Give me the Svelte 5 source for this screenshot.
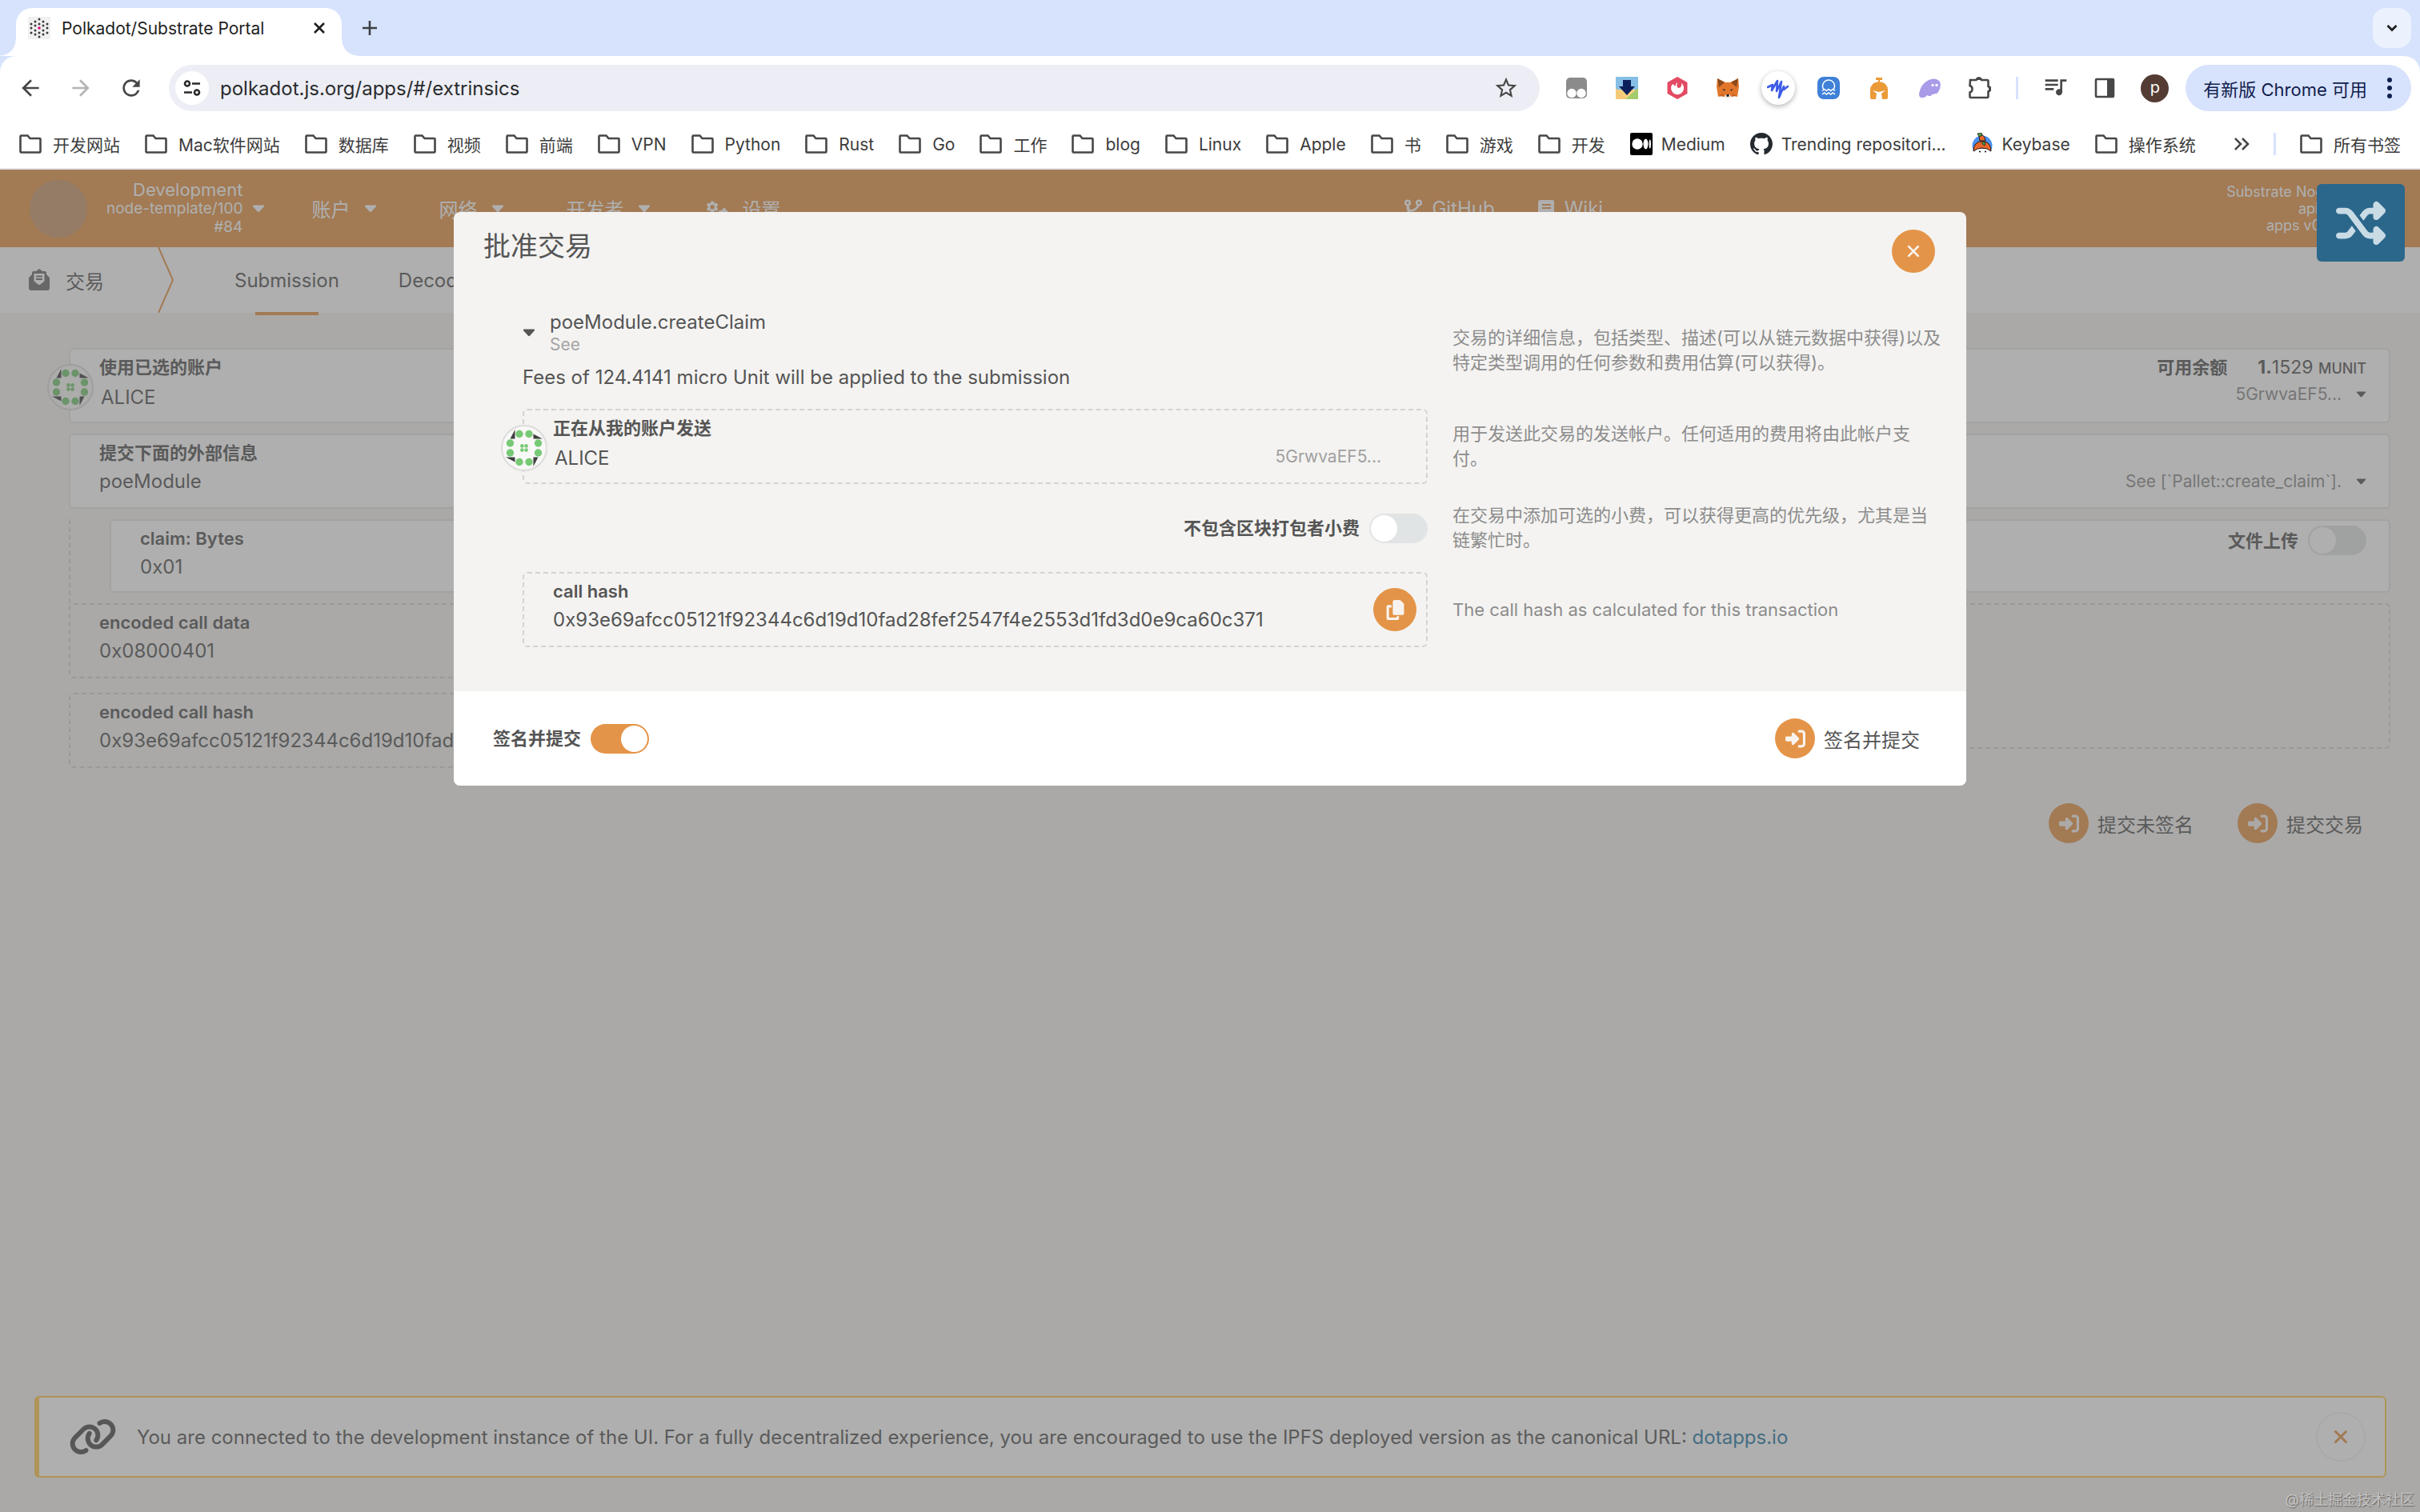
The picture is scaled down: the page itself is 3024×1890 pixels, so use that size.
<script lang="ts">
	type Bookmark = { title: string; icon?: 'medium' | 'github' | 'keybase' };

	const bookmarks: Bookmark[] = [
		{ title: '开发网站' },
		{ title: 'Mac软件网站' },
		{ title: '数据库' },
		{ title: '视频' },
		{ title: '前端' },
		{ title: 'VPN' },
		{ title: 'Python' },
		{ title: 'Rust' },
		{ title: 'Go' },
		{ title: '工作' },
		{ title: 'blog' },
		{ title: 'Linux' },
		{ title: 'Apple' },
		{ title: '书' },
		{ title: '游戏' },
		{ title: '开发' },
		{ title: 'Medium', icon: 'medium' },
		{ title: 'Trending repositori...', icon: 'github' },
		{ title: 'Keybase', icon: 'keybase' },
		{ title: '操作系统' }
	];

	const callHash = '0x93e69afcc05121f92344c6d19d10fad28fef2547f4e2553d1fd3d0e9ca60c371';

	// Dots of the tab icon, as rings around the centre.
	const faviconDots = [
		[14, 3], [9, 6], [19, 6], [4, 9], [14, 9], [24, 9], [9, 11], [19, 11],
		[4, 14], [24, 14], [9, 17], [19, 17], [4, 20], [14, 20], [24, 20], [9, 22], [19, 22], [14, 25]
	];

	let url = $state('polkadot.js.org/apps/#/extrinsics');
	let claim = $state('0x01');
	let fileUpload = $state(false);
	let includeTip = $state(false);
	let signAndSubmit = $state(true);
</script>

{#snippet folder()}
	<svg class="ico28" viewBox="0 0 28 28" aria-hidden="true">
		<path d="M2.5 3.5h8l3 3.5h12q1 0 1 1v15.5q0 1-1 1h-23q-1 0-1-1v-19q0-1 1-1z" fill="none" stroke="#474747" stroke-width="2.6" />
	</svg>
{/snippet}

{#snippet caret()}
	<svg class="caret" viewBox="0 0 16 10" aria-hidden="true">
		<path d="M1.5.5h13q1.2.6.3 1.8L9 8.8q-1 .9-2 0L1.2 2.3Q.3 1.1 1.5.5z" fill="currentColor" />
	</svg>
{/snippet}

{#snippet cross()}
	<svg class="cross" viewBox="0 0 20 20" aria-hidden="true">
		<path d="M3.5 3.5l13 13M16.5 3.5l-13 13" stroke="currentColor" stroke-width="3" stroke-linecap="round" />
	</svg>
{/snippet}

{#snippet signIn()}
	<span class="disc">
		<svg viewBox="0 0 512 512" aria-hidden="true">
			<path
				fill="currentColor"
				d="M217.9 105.9L340.7 228.7c7.2 7.2 11.3 17.1 11.3 27.3s-4.1 20.1-11.3 27.3L217.9 406.1c-6.4 6.4-15 9.9-24 9.9c-18.7 0-33.9-15.2-33.9-33.9l0-62.1L32 320c-17.7 0-32-14.3-32-32l0-64c0-17.7 14.3-32 32-32l128 0 0-62.1c0-18.7 15.2-33.9 33.9-33.9c9 0 17.6 3.6 24 9.9zM352 416l64 0c17.7 0 32-14.3 32-32l0-256c0-17.7-14.3-32-32-32l-64 0c-17.7 0-32-14.3-32-32s14.3-32 32-32l64 0c53 0 96 43 96 96l0 256c0 53-43 96-96 96l-64 0c-17.7 0-32-14.3-32-32s14.3-32 32-32z"
			/>
		</svg>
	</span>
{/snippet}

{#snippet identicon()}
	<svg class="identicon" viewBox="-29 -29 58 58" aria-hidden="true">
		<circle r="28" fill="#f8f8f7" stroke="#dcdcdc" stroke-width="2" />
		<g fill="#404040">
			{#each [0, 90, 180, 270] as turn (turn)}
				<path transform="rotate({turn})" d="M-11.5-23v11.5h-6z" />
			{/each}
		</g>
		<g fill="#78c975">
			{#each [0, 90, 180, 270] as turn (turn)}
				<g transform="rotate({turn})">
					<circle cx="-6" cy="-17.5" r="4.7" />
					<circle cx="6" cy="-17.5" r="4.7" />
					<circle cx="-2.6" cy="-2.6" r="2.3" />
				</g>
			{/each}
		</g>
	</svg>
{/snippet}

<div class="window">
	<header class="chrome">
		<div class="tabstrip">
			<div class="tab">
				<svg class="ico28" viewBox="0 0 28 28" aria-hidden="true">
					<rect width="28" height="28" fill="#f1f1f1" />
					{#each faviconDots as [cx, cy] (`${cx}-${cy}`)}
						<circle {cx} {cy} r="1.5" fill="#3c3c3c" />
					{/each}
					<circle cx="14" cy="14" r="1.8" fill="#e6007a" />
				</svg>
				<span class="tab-title">Polkadot/Substrate Portal</span>
				<button aria-label="Close tab">
					<svg class="ico16" viewBox="0 0 16 16"><path d="M2 2l12 12M14 2L2 14" stroke="#1f1f1f" stroke-width="2.6" /></svg>
				</button>
			</div>
			<button aria-label="New tab">
				<svg class="ico20" viewBox="0 0 20 20"><path d="M10 1v18M1 10h18" stroke="#3c4043" stroke-width="2.6" /></svg>
			</button>
			<button class="tab-search" aria-label="Search tabs">
				<svg class="ico16" viewBox="0 0 16 16"><path d="M2.5 5L8 10.5 13.5 5" fill="none" stroke="#1f1f1f" stroke-width="2.8" /></svg>
			</button>
		</div>

		<div class="toolbar">
			<div class="nav-buttons">
				<button aria-label="Back">
					<svg class="ico32" viewBox="0 0 24 24"><path fill="#474747" d="M20 11H7.83l5.59-5.59L12 4l-8 8 8 8 1.41-1.41L7.83 13H20v-2z" /></svg>
				</button>
				<button aria-label="Forward">
					<svg class="ico32" viewBox="0 0 24 24"><path fill="#b4b4b4" d="M4 11h12.17l-5.59-5.59L12 4l8 8-8 8-1.41-1.41L16.17 13H4v-2z" /></svg>
				</button>
				<button aria-label="Reload">
					<svg class="ico32" viewBox="0 0 24 24"><path fill="#474747" d="M17.65 6.35A7.958 7.958 0 0012 4c-4.42 0-7.99 3.58-7.99 8s3.57 8 7.99 8c3.73 0 6.84-2.55 7.73-6h-2.08A5.99 5.99 0 0112 18c-3.31 0-6-2.69-6-6s2.69-6 6-6c1.66 0 3.14.69 4.22 1.78L13 11h7V4l-2.35 2.35z" /></svg>
				</button>
			</div>
			<div class="omnibox">
				<button class="site-info" aria-label="Site information">
					<svg class="ico24" viewBox="0 0 24 24" fill="none" stroke="#2b2b2b" stroke-width="2.6">
						<circle cx="6" cy="6.5" r="3" /><path d="M12 6.5h10M2 17.5h10" /><circle cx="18" cy="17.5" r="3" />
					</svg>
				</button>
				<input class="url" type="text" aria-label="Address" bind:value={url} />
				<button aria-label="Bookmark this page">
					<svg class="ico32" viewBox="0 0 24 24"><path fill="#474747" d="M22 9.24l-7.19-.62L12 2 9.19 8.63 2 9.24l5.46 4.73L5.82 21 12 17.27 18.18 21l-1.63-7.03L22 9.24zM12 15.4l-3.76 2.27 1-4.28-3.32-2.88 4.38-.38L12 6.1l1.71 4.04 4.38.38-3.32 2.88 1 4.28L12 15.4z" /></svg>
				</button>
			</div>
			<div class="extensions">
				<svg viewBox="0 0 28 28">
					<rect x="1" y="1" width="26" height="26" rx="5" fill="#8b8b8b" />
					<circle cx="8" cy="20.5" r="5.7" fill="#fff" /><circle cx="20" cy="20.5" r="5.7" fill="#fff" />
				</svg>
				<svg viewBox="0 0 28 28">
					<rect width="28" height="28" fill="#f3cf7e" /><path d="M0 0h28v16H0z" fill="#85bfe6" /><path d="M0 14l14 14H0z" fill="#f5c878" /><path d="M28 14L12 28h16z" fill="#a4cc6c" />
					<path d="M9 4h10v8h5L14 23 4 12h5z" fill="#0b1f5a" />
				</svg>
				<svg viewBox="0 0 28 28">
					<path d="M14 0l12.5 7v14L14 28 1.5 21V7z" fill="#e34a63" />
					<path d="M8 9a8 8 0 1 0 13 1l-2-2q1 5-3 6-4 0-2-7-3 2-2 5z" fill="#fff" />
				</svg>
				<svg viewBox="0 0 28 28">
					<path d="M1 2l10 5h6l10-5 1 10-2 13-7-2-3 3h-4l-3-3-7 2L0 12z" fill="#e2762b" />
					<path d="M1 2l9 5-7 6zM27 2l-9 5 7 6z" fill="#8a4a1c" />
					<path d="M11 22h6v3l-1 2h-4l-1-2z" fill="#f3ece5" /><path d="M12 22h4l-1 3h-2z" fill="#1e1e1e" />
					<path d="M7 15l4 1-1 2zM21 15l-4 1 1 2z" fill="#363436" /><path d="M3 24l5-3 2 4zM25 24l-5-3-2 4z" fill="#c9621f" />
				</svg>
				<span class="ext-active">
					<svg viewBox="0 0 28 28"><path d="M1 13l6-3-1 7 7-12-1 13 6-12-3 20 6-14 0 4 5-4" fill="none" stroke="#3d5ce8" stroke-width="2.6" stroke-linejoin="round" stroke-linecap="round" /></svg>
				</span>
				<svg viewBox="0 0 28 28">
					<rect width="28" height="28" rx="8" fill="#3f80d8" />
					<path d="M8 16a7.5 7.5 0 1 1 12 0M6 17.5l2.7-2 2.6 2 2.7-2 2.7 2 2.6-2 2.7 2M6 22l2.7-2 2.6 2 2.7-2 2.7 2 2.6-2 2.7 2" fill="none" stroke="#fff" stroke-width="1.5" />
				</svg>
				<svg viewBox="0 0 28 28">
					<path d="M10 1h8v3h-3v2h-2V4h-3zM3 17Q3 7 14 6q11 1 11 11v9q0 2-2 2h-5l-1-7 5-4-8 2-8-2 5 4-1 7H5q-2 0-2-2z" fill="#eb9a38" />
				</svg>
				<svg viewBox="0 0 28 28">
					<path d="M1 21Q3 9 13 4q9-4 14 2 2 5-1 11-2 5-5 4l-2 1-2 0-1 2h-3l-2-1q-3 4-8 3-2-1-2-5z" fill="#a99be8" />
					<circle cx="18" cy="10.5" r="1.7" fill="#fff" /><circle cx="23" cy="10.5" r="1.7" fill="#fff" />
				</svg>
				<svg viewBox="0 0 28 28">
					<path d="M2 4h7.5a3.5 3.5 0 0 1 6.5 0h7q1.5 0 1.5 1.5V12a3.5 3.5 0 0 1 0 6.5v6q0 1.5-1.5 1.5H2.5q-1 0-1-1v-5.5a4.5 4.5 0 0 0 0-8.5z" fill="none" stroke="#474747" stroke-width="2.6" />
					<path d="M9 4a3.7 3.7 0 0 1 7.5 0zM25 11.5a3.7 3.7 0 0 1 0 7.5z" fill="#474747" />
				</svg>
			</div>
			<span class="separator"></span>
			<div class="tools">
				<button aria-label="Media controls">
					<svg class="ico32" viewBox="0 0 24 24"><path fill="#474747" d="M14 4H2v2h12V4zm0 4H2v2h12V8zM2 14h8v-2H2v2zM16 4v9.18c-.31-.11-.65-.18-1-.18-1.66 0-3 1.34-3 3s1.34 3 3 3 3-1.34 3-3V6h4V4h-6z" /></svg>
				</button>
				<button aria-label="Side panel">
					<svg class="ico28" viewBox="0 0 28 28"><rect x="3" y="3" width="22" height="22" rx="1" fill="none" stroke="#474747" stroke-width="2.6" /><path d="M17 3h8v22h-8z" fill="#474747" /></svg>
				</button>
				<button class="avatar" aria-label="Profile">p</button>
			</div>
			<button class="update">
				<span>有新版 Chrome 可用</span>
				<svg class="dots" viewBox="0 0 6 26" fill="#10204d" aria-hidden="true"><circle cx="3" cy="3" r="3" /><circle cx="3" cy="13" r="3" /><circle cx="3" cy="23" r="3" /></svg>
			</button>
		</div>

		<nav class="bookmarks" aria-label="Bookmarks">
			{#each bookmarks as bookmark, i (i)}
				<a href="#bookmark-{i}" class:site={bookmark.icon}>
					{#if bookmark.icon === 'medium'}
						<svg class="ico28" viewBox="0 0 28 28"><rect width="28" height="28" rx="2" /><g fill="#fff"><circle cx="9" cy="14" r="6.7" /><ellipse cx="19.5" cy="14" rx="3" ry="6.4" /><ellipse cx="24.8" cy="14" rx="1.2" ry="5.6" /></g></svg>
					{:else if bookmark.icon === 'github'}
						<svg class="ico28" viewBox="0 0 16 16"><path fill="#24292f" d="M8 0C3.58 0 0 3.58 0 8c0 3.54 2.29 6.53 5.47 7.59.4.07.55-.17.55-.38 0-.19-.01-.82-.01-1.49-2.01.37-2.53-.49-2.69-.94-.09-.23-.48-.94-.82-1.13-.28-.15-.68-.52-.01-.53.63-.01 1.08.58 1.23.82.72 1.21 1.87.87 2.33.66.07-.52.28-.87.51-1.07-1.78-.2-3.64-.89-3.64-3.95 0-.87.31-1.59.82-2.15-.08-.2-.36-1.02.08-2.12 0 0 .67-.21 2.2.82.64-.18 1.32-.27 2-.27s1.36.09 2 .27c1.53-1.04 2.2-.82 2.2-.82.44 1.1.16 1.92.08 2.12.51.56.82 1.27.82 2.15 0 3.07-1.87 3.75-3.65 3.95.29.25.54.73.54 1.48 0 1.07-.01 1.93-.01 2.2 0 .21.15.46.55.38A8.01 8.01 0 0016 8c0-4.42-3.58-8-8-8z" /></svg>
					{:else if bookmark.icon === 'keybase'}
						<svg class="ico28" viewBox="0 0 28 28">
							<circle cx="14" cy="16" r="12.5" fill="#4a90f0" />
							<path d="M5 20h18l2 8H3z" fill="#fff" />
							<path d="M3 23Q3 11 14 10.5 25 11 25 23l-5-3-6-1-6 1z" fill="#e8672c" stroke="#2a1a12" stroke-width="1" />
							<path d="M10 4q5-3 7 2l1 4h-7z" fill="#e8672c" stroke="#2a1a12" stroke-width="1" />
							<path d="M8 1l5-1 1 3-4 2zM14 10l4 3-1 3-3-2z" fill="#4a9e4a" stroke="#2a1a12" stroke-width=".8" />
							<circle cx="11" cy="23.5" r="1" /><circle cx="18" cy="23.5" r="1" />
						</svg>
					{:else}
						{@render folder()}
					{/if}
					<span>{bookmark.title}</span>
				</a>
			{/each}
			<div class="bookmarks-end">
				<button aria-label="More bookmarks">
					<svg class="ico20" viewBox="0 0 20 20"><path d="M2 3l7 7-7 7M11 3l7 7-7 7" fill="none" stroke="#474747" stroke-width="2.6" /></svg>
				</button>
				<span class="separator"></span>
				<a href="#all">{@render folder()}<span>所有书签</span></a>
			</div>
		</nav>
	</header>

	<div class="page">
		<div class="menu">
			<span class="logo"></span>
			<button class="chain">
				<span class="chain-text">
					<span class="chain-name">Development</span>
					<span>node-template/100</span>
					<span>#84</span>
				</span>
				{@render caret()}
			</button>
			<nav class="menu-left" aria-label="Main">
				<button>账户 {@render caret()}</button>
				<button>网络 {@render caret()}</button>
				<button>开发者 {@render caret()}</button>
				<a href="#settings">
					<svg class="ico28" viewBox="0 0 44 36" fill="currentColor" aria-hidden="true">
						<path id="gear" d="M19.14 12.94c.04-.3.06-.61.06-.94 0-.32-.02-.64-.07-.94l2.03-1.58c.18-.14.23-.41.12-.61l-1.92-3.32c-.12-.22-.37-.29-.59-.22l-2.39.96c-.5-.38-1.03-.7-1.62-.94l-.36-2.54c-.04-.24-.24-.41-.48-.41h-3.84c-.24 0-.43.17-.47.41l-.36 2.54c-.59.24-1.13.57-1.62.94l-2.39-.96c-.22-.08-.47 0-.59.22L2.74 8.87c-.12.21-.08.47.12.61l2.03 1.58c-.05.3-.09.63-.09.94s.02.64.07.94l-2.03 1.58c-.18.14-.23.41-.12.61l1.92 3.32c.12.22.37.29.59.22l2.39-.96c.5.38 1.03.7 1.62.94l.36 2.54c.05.24.24.41.48.41h3.84c.24 0 .44-.17.47-.41l.36-2.54c.59-.24 1.13-.56 1.62-.94l2.39.96c.22.08.47 0 .59-.22l1.92-3.32c.12-.22.07-.47-.12-.61l-2.01-1.58zM12 15.6c-1.98 0-3.6-1.62-3.6-3.6s1.62-3.6 3.6-3.6 3.6 1.62 3.6 3.6-1.62 3.6-3.6 3.6z" transform="scale(1.2)" />
						<use href="#gear" transform="translate(23 14)" />
					</svg>
					设置
				</a>
			</nav>
			<nav class="menu-links" aria-label="External">
				<a href="#github">
					<svg class="ico24" viewBox="0 0 24 24" fill="none" stroke="currentColor" stroke-width="2.6" aria-hidden="true"><circle cx="5" cy="4.5" r="2.8" /><circle cx="19" cy="4.5" r="2.8" /><circle cx="7" cy="20" r="2.8" /><path d="M5 7v5q1 3 6 2t8-7M6 9v8" /></svg>
					GitHub
				</a>
				<a href="#wiki">
					<svg class="ico24" viewBox="0 0 24 24" aria-hidden="true"><path d="M5 1h15q2 0 2 2v14l-1 2v4H5q-3 0-3-4V4q0-3 3-3z" fill="currentColor" /><path d="M7 7h11M7 11h11" stroke="#e49448" stroke-width="2" /></svg>
					Wiki
				</a>
			</nav>
			<div class="versions">
				<span>Substrate Node v4.0.0-d</span>
				<span>api v10.11.2-18</span>
				<span>apps v0.135.2-21-x</span>
			</div>
		</div>

		<nav class="tabs" aria-label="Extrinsics">
			<span class="tabs-title">
				<svg class="ico28" viewBox="0 0 28 28" aria-hidden="true">
					<path d="M14 0l4 3h3q2 0 2 2v2l4 4v13q0 3-3 3H4q-3 0-3-3V11l4-4V5q0-2 2-2h3z" fill="#6e6e6e" />
					<path d="M7.5 6h13v9.5l-5 4q-1.5 1-3 0l-5-4z" fill="#fff" />
					<path d="M10 9.5h8M10 13h8" stroke="#6e6e6e" stroke-width="1.8" />
				</svg>
				交易
			</span>
			<svg class="chevron" viewBox="0 0 20 80" preserveAspectRatio="none" aria-hidden="true"><path d="M1 0l18 40L1 80" fill="none" stroke="#e49448" stroke-width="2" /></svg>
			<a class="active" href="#submission">Submission</a>
			<a href="#decode">Decode</a>
		</nav>

		<main class="content">
			<div class="box account">
				{@render identicon()}
				<div class="field">
					<span class="label">使用已选的账户</span>
					<span class="value">ALICE</span>
				</div>
				<div class="side">
					<span class="balance"><span class="label">可用余额</span><span class="amount"><b>1.</b>1529 <small>MUNIT</small></span></span>
					<button class="pick">5GrwvaEF5... {@render caret()}</button>
				</div>
			</div>
			<div class="box">
				<div class="field">
					<span class="label">提交下面的外部信息</span>
					<span class="value">poeModule</span>
				</div>
				<div class="side low">
					<button class="pick">See [`Pallet::create_claim`]. {@render caret()}</button>
				</div>
			</div>
			<div class="params">
				<div class="box">
					<div class="field">
						<label class="label" for="claim">claim: Bytes</label>
						<input id="claim" class="value" type="text" bind:value={claim} />
					</div>
					<div class="side">
						<label class="toggle"><span class="label">文件上传</span><input type="checkbox" role="switch" bind:checked={fileUpload} /></label>
					</div>
				</div>
			</div>
			<div class="outputs">
				<div class="column">
					<div class="box dashed"><div class="field"><span class="label">encoded call data</span><output class="value">0x08000401</output></div></div>
					<div class="box dashed"><div class="field"><span class="label">encoded call hash</span><output class="value">{callHash.slice(0, 34)}</output></div></div>
				</div>
				<div class="box dashed decoded"></div>
			</div>
			<div class="actions">
				<button class="action">{@render signIn()}提交未签名</button>
				<button class="action">{@render signIn()}提交交易</button>
			</div>
		</main>

		<aside class="banner">
			<svg class="link-icon" viewBox="0 0 640 512" aria-hidden="true"><path fill="#4e4e4e" d="M579.8 267.7c56.5-56.5 56.5-148 0-204.5c-50-50-128.8-56.5-186.3-15.4l-1.6 1.1c-14.4 10.3-17.7 30.3-7.4 44.6s30.3 17.7 44.6 7.4l1.6-1.1c32.1-22.9 76-19.3 103.8 8.6c31.5 31.5 31.5 82.5 0 114L422.3 334.8c-31.5 31.5-82.5 31.5-114 0c-27.9-27.9-31.5-71.8-8.6-103.8l1.1-1.6c10.3-14.4 6.9-34.4-7.4-44.6s-34.4-6.9-44.6 7.4l-1.1 1.6C206.5 251.2 213 330 263 380c56.5 56.5 148 56.5 204.5 0L579.8 267.7zM60.2 244.3c-56.5 56.5-56.5 148 0 204.5c50 50 128.8 56.5 186.3 15.4l1.6-1.1c14.4-10.3 17.7-30.3 7.4-44.6s-30.3-17.7-44.6-7.4l-1.6 1.1c-32.1 22.9-76 19.3-103.8-8.6C74 372 74 321 105.5 289.5L217.7 177.2c31.5-31.5 82.5-31.5 114 0c27.9 27.9 31.5 71.8 8.6 103.9l-1.1 1.6c-10.3 14.4-6.9 34.4 7.4 44.6s34.4 6.9 44.6-7.4l1.1-1.6C433.5 260.8 427 182 377 132c-56.5-56.5-148-56.5-204.5 0L60.2 244.3z" /></svg>
			<p>You are connected to the development instance of the UI. For a fully decentralized experience, you are encouraged to use the IPFS deployed version as the canonical URL: <a href="#dotapps">dotapps.io</a></p>
			<button class="dismiss" aria-label="Dismiss">{@render cross()}</button>
		</aside>

		<div class="overlay">
			<div class="modal" role="dialog" aria-modal="true" aria-labelledby="modal-title">
				<div class="modal-header">
					<h1 id="modal-title">批准交易</h1>
					<button class="disc large" aria-label="Close">{@render cross()}</button>
				</div>
				<div class="modal-body">
					<div class="row">
						<div>
							<button class="call">
								{@render caret()}
								<span class="call-text"><span class="call-name">poeModule.createClaim</span><span class="call-doc">See</span></span>
							</button>
							<p class="fees">Fees of 124.4141 micro Unit will be applied to the submission</p>
						</div>
						<p class="hint">交易的详细信息，包括类型、描述(可以从链元数据中获得)以及特定类型调用的任何参数和费用估算(可以获得)。</p>
					</div>
					<div class="row">
						<div class="box dashed account">
							{@render identicon()}
							<div class="field">
								<span class="label">正在从我的账户发送</span>
								<span class="value">ALICE</span>
							</div>
							<div class="side low"><span class="address">5GrwvaEF5...</span></div>
						</div>
						<p class="hint">用于发送此交易的发送帐户。任何适用的费用将由此帐户支付。</p>
					</div>
					<div class="row">
						<label class="toggle end"><span class="label">不包含区块打包者小费</span><input type="checkbox" role="switch" bind:checked={includeTip} /></label>
						<p class="hint">在交易中添加可选的小费，可以获得更高的优先级，尤其是当链繁忙时。</p>
					</div>
					<div class="row">
						<div class="box dashed copyable">
							<div class="field">
								<span class="label">call hash</span>
								<output class="value">{callHash}</output>
							</div>
							<button class="disc large" aria-label="Copy">
								<svg viewBox="0 0 448 512" aria-hidden="true"><path fill="currentColor" d="M208 0H332.1c12.7 0 24.9 5.1 33.9 14.1l67.9 67.9c9 9 14.1 21.2 14.1 33.9V336c0 26.5-21.5 48-48 48H208c-26.5 0-48-21.5-48-48V48c0-26.5 21.5-48 48-48zM48 128h80v64H64V448H256V416h64v48c0 26.5-21.5 48-48 48H48c-26.5 0-48-21.5-48-48V176c0-26.5 21.5-48 48-48z" /></svg>
							</button>
						</div>
						<p class="hint">The call hash as calculated for this transaction</p>
					</div>
				</div>
				<div class="modal-footer">
					<label class="toggle"><span class="label">签名并提交</span><input type="checkbox" role="switch" bind:checked={signAndSubmit} /></label>
					<button class="action">{@render signIn()}签名并提交</button>
				</div>
			</div>
			<button class="shuffle" aria-label="Shuffle">
				<svg viewBox="0 0 512 512" aria-hidden="true"><path fill="#c9dbe5" d="M403.8 34.4c12-5 25.7-2.2 34.9 6.9l64 64c6 6 9.4 14.1 9.4 22.6s-3.4 16.6-9.4 22.6l-64 64c-9.2 9.2-22.9 11.9-34.9 6.9s-19.8-16.6-19.8-29.6V160H352c-10.1 0-19.6 4.7-25.6 12.8L284 229.3 244 176l31.2-41.6C293.3 110.2 321.8 96 352 96h32V64c0-12.9 7.8-24.6 19.8-29.6zM164 282.7L204 336l-31.2 41.6C154.7 401.8 126.2 416 96 416H32c-17.7 0-32-14.3-32-32s14.3-32 32-32H96c10.1 0 19.6-4.7 25.6-12.8L164 282.7zm274.6 188c-9.2 9.2-22.9 11.9-34.9 6.9s-19.8-16.6-19.8-29.6V416H352c-30.2 0-58.7-14.2-76.8-38.4L121.6 172.8c-6-8.1-15.5-12.8-25.6-12.8H32c-17.7 0-32-14.3-32-32s14.3-32 32-32H96c30.2 0 58.7 14.2 76.8 38.4L326.4 339.2c6 8.1 15.5 12.8 25.6 12.8h32V320c0-12.9 7.8-24.6 19.8-29.6s25.7-2.2 34.9 6.9l64 64c6 6 9.4 14.1 9.4 22.6s-3.4 16.6-9.4 22.6l-64 64z" /></svg>
			</button>
			<span class="watermark">@稀土掘金技术社区</span>
		</div>
	</div>
</div>

<style>
	:global(body) {
		margin: 0;
	}

	.window {
		--orange: #e49448;
		--text: #555;
		--muted: #8c8c8c;
		display: flex;
		flex-direction: column;
		min-height: 100vh;
		font-family: Inter, 'Noto Sans CJK SC', sans-serif;
		font-size: 24px;
		color: var(--text);
	}

	.window :global(*) {
		box-sizing: border-box;
	}

	svg {
		display: block;
		flex: none;
	}

	button,
	input {
		font: inherit;
		color: inherit;
	}

	button {
		display: flex;
		align-items: center;
		padding: 0;
		border: 0;
		background: none;
		white-space: nowrap;
	}

	a {
		color: inherit;
		text-decoration: none;
	}

	p,
	h1 {
		margin: 0;
	}

	.ico16 {
		width: 16px;
		height: 16px;
	}
	.ico20 {
		width: 20px;
		height: 20px;
	}
	.ico24 {
		width: 24px;
		height: 24px;
	}
	.ico28 {
		width: 28px;
		height: 28px;
	}
	.ico32 {
		width: 32px;
		height: 32px;
	}

	/* Browser frame */
	.chrome {
		background: #d7e2fc;
		border-bottom: 2px solid #e3e3e6;
		color: #3c3c3c;
	}

	.tabstrip {
		display: flex;
		align-items: center;
		height: 70px;
		padding: 0 11px 0 20px;
	}

	.tab {
		position: relative;
		display: flex;
		align-items: center;
		align-self: flex-end;
		width: 407px;
		height: 60px;
		margin-right: 25px;
		padding: 0 20px 10px 15px;
		border-radius: 20px 20px 0 0;
		background: #fff;
		font-size: 21px;
		color: #1f1f1f;
	}

	.tab::before,
	.tab::after {
		content: '';
		position: absolute;
		bottom: 0;
		width: 20px;
		height: 20px;
	}
	.tab::before {
		right: 100%;
		background: radial-gradient(circle at 0 0, #d7e2fc 19px, #fff 20px);
	}
	.tab::after {
		left: 100%;
		background: radial-gradient(circle at 100% 0, #d7e2fc 19px, #fff 20px);
	}

	.tab-title {
		flex: 1;
		padding-left: 14px;
	}

	.tab-search {
		justify-content: center;
		width: 48px;
		height: 50px;
		margin-left: auto;
		border-radius: 16px;
		background: #ebf1fd;
	}

	.toolbar {
		display: flex;
		align-items: center;
		height: 80px;
		padding: 0 11px 0 22px;
		border-radius: 20px 20px 0 0;
		background: #fff;
	}

	.nav-buttons {
		display: flex;
		gap: 31px;
		margin-right: 31px;
	}

	.omnibox {
		display: flex;
		flex: 1;
		align-items: center;
		gap: 14px;
		height: 58px;
		padding: 0 26px 0 8px;
		border-radius: 29px;
		background: #edeef5;
	}

	.site-info {
		justify-content: center;
		width: 42px;
		height: 42px;
		border-radius: 50%;
		background: #fff;
	}

	.url {
		flex: 1;
		border: 0;
		padding: 0;
		background: none;
		color: #2a2b2e;
		outline: none;
	}

	.extensions {
		display: flex;
		align-items: center;
		gap: 35px;
		margin-left: 32px;
	}
	.extensions svg {
		width: 28px;
		height: 28px;
	}

	.ext-active {
		display: grid;
		place-items: center;
		width: 42px;
		height: 42px;
		margin: 0 -7px;
		border-radius: 50%;
		background: #fff;
		box-shadow: 0 2px 6px rgb(0 0 0 / 30%);
	}

	.separator {
		width: 3px;
		height: 28px;
		background: #d7e2fc;
	}

	.toolbar .separator {
		margin: 0 31px;
	}

	.tools {
		display: flex;
		align-items: center;
		gap: 31px;
		margin-right: 21px;
	}

	.avatar {
		justify-content: center;
		width: 35px;
		height: 35px;
		padding-bottom: 2px;
		border-radius: 50%;
		background: #543c34;
		color: #fff;
		font-size: 20px;
	}

	.update {
		gap: 25px;
		height: 58px;
		padding: 0 24px 0 22px;
		border-radius: 29px;
		background: #d7e2fc;
		color: #10204d;
		font-size: 22px;
	}

	.dots {
		width: 6px;
		height: 26px;
	}

	.bookmarks {
		display: flex;
		align-items: center;
		gap: 31px;
		height: 60px;
		padding: 0 24px;
		background: #fff;
		font-size: 21px;
		white-space: nowrap;
	}
	.bookmarks a {
		display: flex;
		align-items: center;
		gap: 14px;
	}
	.bookmarks a.site {
		gap: 11px;
	}

	.bookmarks-end {
		display: flex;
		align-items: center;
		gap: 30px;
		margin-left: auto;
	}

	/* Portal page */
	.page {
		position: relative;
		display: flex;
		flex: 1;
		flex-direction: column;
		background: #f4f3f0;
	}

	.menu {
		display: flex;
		align-items: center;
		height: 97px;
		padding: 0 32px 0 37px;
		background: var(--orange);
		color: #fff;
	}
	.menu a,
	.menu nav button {
		display: flex;
		align-items: center;
		gap: 18px;
	}
	.menu nav button {
		padding-left: 9px;
	}

	.logo {
		width: 72px;
		height: 72px;
		border-radius: 50%;
		background: #c8986e;
	}

	.chain {
		gap: 12px;
		margin-left: 24px;
		font-size: 19px;
		line-height: 23px;
	}
	.chain-text {
		display: grid;
		text-align: right;
	}
	.chain-name {
		font-size: 22px;
	}

	.caret {
		width: 16px;
		height: 10px;
	}

	.menu nav {
		display: flex;
		align-items: center;
	}
	.menu .menu-left {
		gap: 68px;
		margin-left: 49px;
	}
	.menu .menu-links {
		gap: 52px;
		margin: 0 auto;
	}
	.menu .menu-links a {
		gap: 11px;
	}

	.versions {
		display: grid;
		text-align: right;
		font-size: 18px;
		line-height: 21px;
	}

	.tabs {
		display: flex;
		align-items: stretch;
		height: 82px;
		padding-left: 35px;
		background: #fff;
	}
	.tabs > :global(*) {
		display: flex;
		align-items: center;
	}
	.tabs-title {
		gap: 19px;
	}
	.chevron {
		width: 20px;
		height: 82px;
		margin: 0 76px 0 67px;
	}
	.tabs a {
		position: relative;
		margin-right: 74px;
	}
	.tabs .active::after {
		content: '';
		position: absolute;
		bottom: -3px;
		left: 20%;
		width: 60%;
		height: 4px;
		background: var(--orange);
	}

	.content {
		display: flex;
		flex-direction: column;
		gap: 13px;
		padding: 44px 37px 0 86px;
	}

	.box {
		position: relative;
		display: flex;
		justify-content: space-between;
		min-height: 94px;
		padding: 6px 28px 6px 36px;
		border: 2px solid #e4e4e2;
		border-radius: 6px;
		background: #fff;
	}
	.box.dashed {
		border: 2px dashed #d4d3d1;
		background: none;
	}

	.field {
		display: flex;
		flex: 1;
		flex-direction: column;
	}

	.label {
		font-size: 22px;
		font-weight: 600;
		line-height: 32px;
	}

	.value {
		border: 0;
		padding: 0;
		background: none;
		line-height: 40px;
		white-space: nowrap;
	}
	.account .value {
		padding: 2px 0 0 2px;
	}

	.identicon {
		position: absolute;
		top: 18px;
		left: -29px;
		width: 58px;
		height: 58px;
	}

	.side {
		display: flex;
		flex-direction: column;
		align-items: flex-end;
		color: var(--text);
	}
	.side.low {
		padding-top: 36px;
	}

	.balance {
		display: flex;
		gap: 38px;
	}
	.amount {
		font-size: 23px;
		line-height: 32px;
	}
	.amount small {
		font-size: 18px;
		font-weight: 500;
	}

	.pick {
		gap: 18px;
		color: var(--muted);
		font-size: 21px;
		line-height: 32px;
	}
	.pick .caret {
		width: 13px;
		height: 8px;
		color: var(--text);
	}

	.toggle {
		display: flex;
		align-items: center;
		gap: 12px;
	}
	.toggle.end {
		justify-content: flex-end;
	}
	.toggle input {
		appearance: none;
		width: 73px;
		height: 37px;
		margin: 0;
		border-radius: 19px;
		background: #e1e4e5;
	}
	.toggle input::before {
		content: '';
		display: block;
		width: 33px;
		height: 33px;
		margin: 2px;
		border-radius: 50%;
		background: #fff;
	}
	.toggle input:checked {
		background: var(--orange);
	}
	.toggle input:checked::before {
		margin-left: 38px;
	}

	.params {
		margin-bottom: -13px;
		padding: 0 0 13px 49px;
		border-left: 2px dashed #d4d3d1;
	}
	.params .box {
		min-height: 92px;
	}

	.outputs {
		display: grid;
		grid-template-columns: 1fr 1fr;
		align-items: start;
	}
	.column {
		display: grid;
		gap: 18px;
	}
	.decoded {
		min-height: 182px;
	}

	.actions {
		display: flex;
		justify-content: flex-end;
		gap: 55px;
		padding: 31px 34px 0 0;
	}

	.action {
		gap: 11px;
	}

	.disc {
		display: grid;
		flex: none;
		place-items: center;
		width: 50px;
		height: 50px;
		border-radius: 50%;
		background: var(--orange);
		color: #f8f3ee;
	}
	.disc.large {
		width: 54px;
		height: 54px;
	}
	.disc svg {
		width: 25px;
		height: 25px;
	}
	.disc .cross {
		width: 18px;
		height: 18px;
	}

	.banner {
		display: flex;
		align-items: center;
		height: 102px;
		margin: auto 42px 43px 43px;
		padding: 0 24px 0 37px;
		border: 2px solid #ffc94d;
		border-left-width: 6px;
		border-radius: 6px;
		background: #fff;
	}
	.banner p {
		flex: 1;
		padding-left: 25px;
	}
	.banner a {
		color: #2b7aa5;
	}
	.link-icon {
		width: 60px;
		height: 48px;
	}

	.dismiss {
		justify-content: center;
		width: 62px;
		height: 62px;
		border: 2px solid #f2f2f2;
		border-radius: 50%;
		color: var(--orange);
	}
	.cross {
		width: 20px;
		height: 20px;
	}

	/* Confirmation dialog */
	.overlay {
		position: absolute;
		inset: 0;
		background: rgb(96 96 96 / 50%);
	}

	.modal {
		width: 62.5%;
		margin: 53px auto 0;
		overflow: hidden;
		border-radius: 8px;
		background: #f4f3f1;
	}

	.modal-header {
		display: flex;
		align-items: flex-start;
		justify-content: space-between;
		padding: 22px 39px 0 37px;
	}
	.modal-header h1 {
		font-size: 34px;
		font-weight: 400;
		line-height: 42px;
	}

	.modal-body {
		display: grid;
		gap: 24px;
		padding: 47px 28px 55px 86px;
	}

	.row {
		display: grid;
		grid-template-columns: 35fr 19fr;
		align-items: center;
		gap: 31px;
	}

	.call {
		gap: 18px;
		text-align: left;
	}
	.call-text {
		display: grid;
	}
	.call-name {
		line-height: 30px;
	}
	.call-doc {
		color: #a5a5a5;
		font-size: 21px;
		line-height: 26px;
	}
	.fees {
		padding-top: 13px;
		line-height: 30px;
	}

	.hint {
		color: var(--muted);
		font-size: 22px;
		line-height: 31px;
	}

	.address {
		padding-right: 28px;
		color: #a0a0a0;
		font-size: 21px;
		line-height: 32px;
	}

	.copyable {
		padding-right: 12px;
	}
	.copyable .disc {
		align-self: center;
	}

	.modal-footer {
		display: flex;
		align-items: center;
		justify-content: space-between;
		height: 118px;
		padding: 0 58px 0 49px;
		background: #fff;
	}

	/* Floats over the right end of the menu */
	.shuffle {
		position: absolute;
		top: 18px;
		right: 19px;
		justify-content: center;
		width: 110px;
		height: 97px;
		border-radius: 6px;
		background: #2b678b;
	}
	.shuffle svg {
		width: 62px;
		height: 62px;
	}

	.watermark {
		position: absolute;
		right: 7px;
		bottom: 4px;
		color: #c4c4c4;
		font-size: 18px;
		text-shadow: 1px 1px 1px #666;
	}
</style>
